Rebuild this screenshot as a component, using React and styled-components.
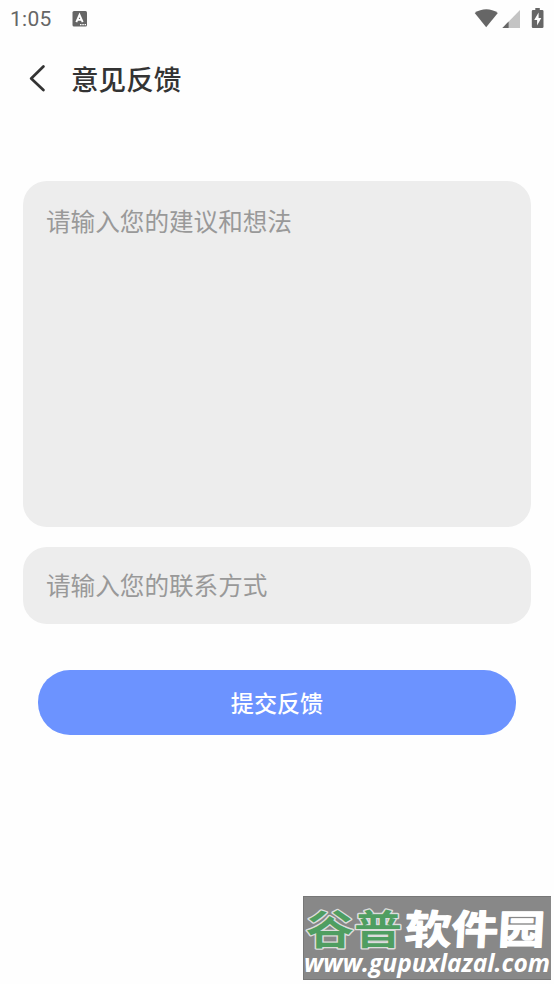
import React from 'react';
import styled, { createGlobalStyle } from 'styled-components';

const GlobalStyle = createGlobalStyle`
  * {
    box-sizing: border-box;
  }

  body {
    margin: 0;
    background: #fefefe;
    font-family: Roboto, 'Noto Sans CJK SC', sans-serif;
  }
`;

const Screen = styled.main`
  position: relative;
  display: flex;
  flex-direction: column;
  height: 984px;
  overflow: hidden;
`;

const StatusBar = styled.div`
  display: flex;
  align-items: center;
  height: 38px;
  padding: 0 9px 0 10px;
  color: #666;

  svg {
    display: block;
  }
`;

const Clock = styled.span`
  width: 62px;
  font-size: 21px;
  line-height: 38px;
  letter-spacing: 0.3px;
`;

const StatusIcons = styled.div`
  display: flex;
  margin-left: auto;
`;

const Header = styled.header`
  display: flex;
  align-items: center;
  height: 80px;
  padding-left: 28px;
`;

const BackButton = styled.button`
  width: 43px;
  padding: 0;
  border: 0;
  background: none;
  color: #333;

  svg {
    display: block;
  }
`;

const Title = styled.h1`
  margin: 0;
  font-family: 'Noto Sans CJK SC', sans-serif;
  font-size: 27.6px;
  font-weight: 500;
  line-height: 40px;
  color: #333;
`;

const Form = styled.form`
  display: flex;
  flex-direction: column;
  padding: 63.3px 23px 0;
`;

const Field = styled.textarea`
  display: block;
  width: 100%;
  height: ${props => props.$height}px;
  margin: 0 0 ${props => props.$gap}px;
  padding: ${props => props.$inset}px 23px 0;
  border: 0;
  border-radius: 24px;
  outline: 0;
  resize: none;
  overflow: hidden;
  background: #ededed;
  font-family: 'Noto Sans CJK SC', sans-serif;
  font-size: 24.6px;
  line-height: 36px;

  &::placeholder {
    color: #999;
    opacity: 1;
  }
`;

const SubmitButton = styled.button`
  height: 65px;
  margin: 0 15.3px;
  padding: 0;
  border: 0;
  border-radius: 32px;
  background: #6c93ff;
  color: #fff;
  font-family: 'Noto Sans CJK SC', sans-serif;
  font-size: 23.1px;
  font-weight: 500;
  line-height: 65px;
`;

const Watermark = styled.div`
  position: absolute;
  right: 3px;
  bottom: 4px;
  width: 248px;
  height: 84px;
  border: 1px solid #777;
  border-right: 0;
  background: #888;

  svg {
    display: block;
    margin: -1px;
    overflow: visible;
  }
`;

const App = () => (
  <>
    <GlobalStyle />
    <Screen>
      <StatusBar>
        <Clock>1:05</Clock>
        <svg width="16" height="16" viewBox="0 0 16 16">
          <rect x="0.5" y="0" width="14.5" height="15.5" rx="1.5" fill="#666" />
          <path d="M4.3 11.2 7.5 3.8l3.2 7.4M5.4 8.9h4.2" fill="none" stroke="#fff" strokeWidth="1.9" />
          <path d="M8 13.7h1.5M10.3 13.7h1.5M12.6 13.7H14" stroke="#fff" strokeWidth="1.2" />
        </svg>
        <StatusIcons>
          <svg width="72" height="22" viewBox="0 0 72 22">
            <path d="M1.7 5C8.8.1 17.8.1 24.8 5L13.2 19.2z" fill="#666" />
            <path d="M47 2v18H29.4z" fill="#c4c4c4" />
            <path d="M35.6 13.5V20h-6.2z" fill="#666" />
            <path
              d="M62.3 0h4.5v2h2.4q1.3 0 1.3 1.3v15.4q0 1.3-1.3 1.3h-9.1q-1.3 0-1.3-1.3V3.3q0-1.3 1.3-1.3h2.2z"
              fill="#666"
            />
            <path d="M65.6 4.5 61.2 12h2.9v5.5l4.2-7.4h-2.7z" fill="#fff" />
          </svg>
        </StatusIcons>
      </StatusBar>

      <Header>
        <BackButton aria-label="返回">
          <svg width="18" height="28" viewBox="0 0 18 28">
            <path
              d="M15.4 2.5 3.2 14.5l12.2 11.6"
              fill="none"
              stroke="currentColor"
              strokeWidth="2.7"
              strokeLinecap="round"
              strokeLinejoin="round"
            />
          </svg>
        </BackButton>
        <Title>意见反馈</Title>
      </Header>

      <Form>
        <Field $height={345.7} $gap={20.3} $inset={21} placeholder="请输入您的建议和想法" />
        <Field $height={76.7} $gap={46.3} $inset={19} rows={1} placeholder="请输入您的联系方式" />
        <SubmitButton type="button">提交反馈</SubmitButton>
      </Form>

      <Watermark>
        <svg width="248" height="84" viewBox="0 0 248 84">
          <g
            fontFamily="'Noto Sans CJK SC', sans-serif"
            fontWeight="700"
            strokeLinejoin="round"
            paintOrder="stroke"
          >
            <text
              transform="translate(3 48) scale(1.2 1)"
              fontSize="40"
              fill="#4f9e61"
              stroke="#ddd"
              strokeWidth="2.6"
            >
              谷普
            </text>
            <text
              transform="translate(101 48) skewX(-3) scale(1.17 1)"
              fontSize="40"
              fill="#fff"
              stroke="#fff"
              strokeWidth="1.2"
            >
              软件园
            </text>
          </g>
          <text
            x="1"
            y="76"
            fontFamily="'Open Sans', sans-serif"
            fontSize="24.5"
            fontStyle="italic"
            fontWeight="700"
            fill="#fff"
            textLength="246"
            lengthAdjust="spacingAndGlyphs"
          >
            www.gupuxlazal.com
          </text>
        </svg>
      </Watermark>
    </Screen>
  </>
);

export default App;
